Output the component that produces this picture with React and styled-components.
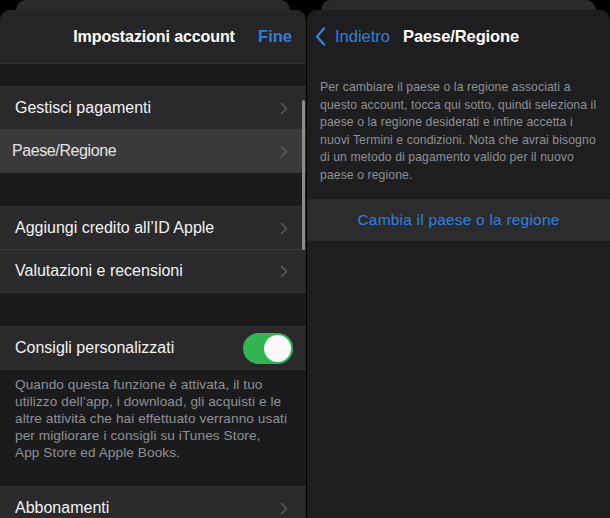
import React from 'react';
import styled, { createGlobalStyle } from 'styled-components';

const GlobalStyle = createGlobalStyle`
  html, body {
    margin: 0;
    padding: 0;
    background: #000;
  }
  body {
    font-family: "Liberation Sans", Arial, sans-serif;
    -webkit-font-smoothing: antialiased;
  }
`;

const Page = styled.div`
  display: flex;
  gap: 1px;
  width: 610px;
  height: 518px;
  overflow: hidden;
  background: #000;
`;

const Phone = styled.div`
  display: flex;
  flex-direction: column;
  width: ${p => p.width}px;
  flex-shrink: 0;
`;

const BackCard = styled.div`
  height: 10px;
  margin: 0 ${p => p.inset}px;
  background: #2a2a2c;
  border-radius: 10px 10px 0 0;
`;

const Sheet = styled.div`
  position: relative;
  flex: 1;
  display: flex;
  flex-direction: column;
  background: ${p => p.bg};
  border-radius: 10px 10px 0 0;
  overflow: hidden;
`;

const Header = styled.div`
  display: flex;
  align-items: center;
  height: 53px;
  flex-shrink: 0;
  padding: 0 14px 0 ${p => p.left || 14}px;
  background: ${p => p.bg};
  border-bottom: 1px solid ${p => p.line};
`;

const Title = styled.div`
  color: #fff;
  font-size: ${p => (p.center ? 16 : 16.5)}px;
  font-weight: 700;
  letter-spacing: -0.1px;
  flex: ${p => (p.center ? 1 : 'none')};
  text-align: ${p => (p.center ? 'center' : 'left')};
  padding-left: ${p => (p.center ? 36 : 0)}px;
`;

const NavButton = styled.div`
  display: flex;
  align-items: center;
  gap: 9px;
  color: #2f80dd;
  font-size: 16.5px;
  font-weight: ${p => (p.bold ? 700 : 400)};
  margin-right: ${p => p.gapRight || 0}px;
`;

const Spacer = styled.div`
  height: ${p => p.h}px;
  flex-shrink: 0;
`;

const Group = styled.div`
  background: #2a2a2c;
  border-top: 1px solid #333335;
  border-bottom: 1px solid #333335;
`;

const Row = styled.div`
  display: flex;
  align-items: center;
  justify-content: space-between;
  height: 42px;
  padding: 0 18px 0 ${p => p.left || 15}px;
  background: ${p => (p.active ? '#3a3a3c' : 'transparent')};
  color: ${p => (p.active ? '#e4e4e6' : '#f2f2f4')};
  font-size: 16px;
  letter-spacing: ${p => (p.active ? -0.4 : 0)}px;
  position: relative;

  & + & {
    border-top: 1px solid #3a3a3c;
  }
`;

const Toggle = styled.div`
  width: 50px;
  height: 31px;
  border-radius: 16px;
  background: #31b653;
  display: flex;
  align-items: center;
  justify-content: flex-end;
  padding: 2px;
  box-sizing: border-box;
  margin-right: -5px;
`;

const Knob = styled.div`
  width: 27px;
  height: 27px;
  border-radius: 50%;
  background: #fafafa;
`;

const Note = styled.div`
  padding: ${p => p.pad};
  color: #909095;
  font-size: ${p => p.size}px;
  line-height: ${p => p.lh}px;
  white-space: nowrap;
  letter-spacing: 0.1px;
`;

const ActionRow = styled.div`
  display: flex;
  align-items: center;
  justify-content: center;
  height: 42px;
  background: #2c2c2e;
  color: #2f80dd;
  font-size: 15.5px;
  letter-spacing: 0.2px;
`;

const ScrollBar = styled.div`
  position: absolute;
  right: 1px;
  top: 90px;
  width: 3px;
  height: 150px;
  border-radius: 2px;
  background: #8c8c8f;
`;

const Chevron = () => (
  <svg width="8" height="13" viewBox="0 0 8 13" fill="none">
    <path d="M1.5 1.5 L6.5 6.5 L1.5 11.5" stroke="#5c5c60" strokeWidth="1.6" strokeLinecap="round" strokeLinejoin="round" />
  </svg>
);

const BackChevron = () => (
  <svg width="11" height="19" viewBox="0 0 11 19" fill="none">
    <path d="M9 1.5 L2 9.5 L9 17.5" stroke="#2f80dd" strokeWidth="2.4" strokeLinecap="round" strokeLinejoin="round" />
  </svg>
);

const SettingsRow = ({ label, active, left }) => (
  <Row active={active} left={left}>
    <span>{label}</span>
    <Chevron />
  </Row>
);

export default function App() {
  return (
    <>
      <GlobalStyle />
      <Page>
        <Phone width={306}>
          <BackCard inset={16} />
          <Sheet bg="#1b1b1d">
            <Header bg="#252527" line="#2e2e30">
              <Title center>Impostazioni account</Title>
              <NavButton bold>Fine</NavButton>
            </Header>
            <Spacer h={22} />
            <Group>
              <SettingsRow label="Gestisci pagamenti" />
              <SettingsRow label="Paese/Regione" active left={12} />
            </Group>
            <Spacer h={33} />
            <Group>
              <SettingsRow label="Aggiungi credito all’ID Apple" />
              <SettingsRow label="Valutazioni e recensioni" />
            </Group>
            <Spacer h={33} />
            <Group>
              <Row>
                <span>Consigli personalizzati</span>
                <Toggle>
                  <Knob />
                </Toggle>
              </Row>
            </Group>
            <Note pad="6px 15px 0" size={13.6} lh={17}>
              Quando questa funzione è attivata, il tuo
              <br />
              utilizzo dell’app, i download, gli acquisti e le
              <br />
              altre attività che hai effettuato verranno usati
              <br />
              per migliorare i consigli su iTunes Store,
              <br />
              App Store ed Apple Books.
            </Note>
            <Spacer h={25} />
            <Group>
              <SettingsRow label="Abbonamenti" />
            </Group>
            <ScrollBar />
          </Sheet>
        </Phone>
        <Phone width={303}>
          <BackCard inset={14} />
          <Sheet bg="#1e1e20">
            <Header bg="#1e1e20" line="#1e1e20" left={8}>
              <NavButton gapRight={13}>
                <BackChevron />
                <span>Indietro</span>
              </NavButton>
              <Title>Paese/Regione</Title>
            </Header>
            <Note pad="15px 13px 0" size={12.2} lh={17.5}>
              Per cambiare il paese o la regione associati a
              <br />
              questo account, tocca qui sotto, quindi seleziona il
              <br />
              paese o la regione desiderati e infine accetta i
              <br />
              nuovi Termini e condizioni. Nota che avrai bisogno
              <br />
              di un metodo di pagamento valido per il nuovo
              <br />
              paese o regione.
            </Note>
            <Spacer h={15} />
            <ActionRow>Cambia il paese o la regione</ActionRow>
          </Sheet>
        </Phone>
      </Page>
    </>
  );
}
